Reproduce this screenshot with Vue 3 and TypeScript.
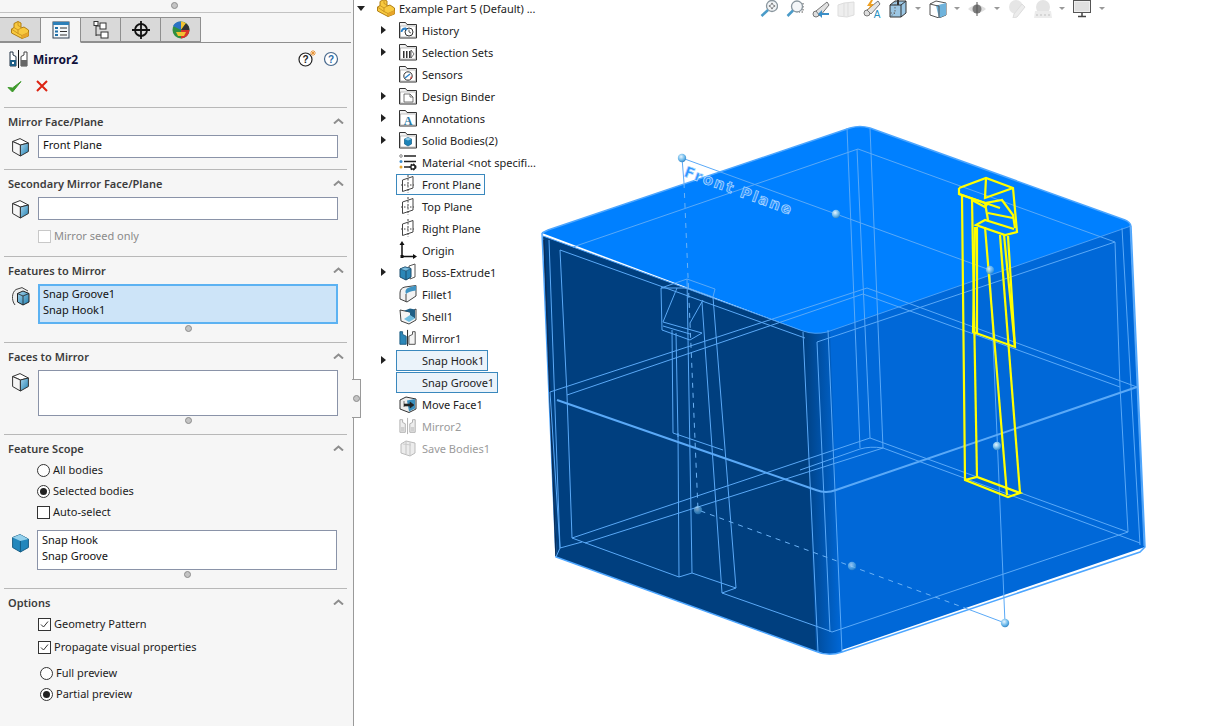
<script setup lang="ts">
interface TreeRow { label: string; icon: string; arrow?: boolean; selected?: boolean; tint?: boolean; muted?: boolean }

const treeRows: TreeRow[] = [
  { label: 'History', icon: 'f-history', arrow: true },
  { label: 'Selection Sets', icon: 'f-sets', arrow: true },
  { label: 'Sensors', icon: 'f-sensors' },
  { label: 'Design Binder', icon: 'f-binder', arrow: true },
  { label: 'Annotations', icon: 'f-annot', arrow: true },
  { label: 'Solid Bodies(2)', icon: 'f-bodies', arrow: true },
  { label: 'Material <not specifi...', icon: 'material' },
  { label: 'Front Plane', icon: 'plane', selected: true },
  { label: 'Top Plane', icon: 'plane' },
  { label: 'Right Plane', icon: 'plane' },
  { label: 'Origin', icon: 'origin' },
  { label: 'Boss-Extrude1', icon: 'boss', arrow: true },
  { label: 'Fillet1', icon: 'fillet' },
  { label: 'Shell1', icon: 'shell' },
  { label: 'Mirror1', icon: 'mirror-blue' },
  { label: 'Snap Hook1', icon: 'none', arrow: true, selected: true, tint: true },
  { label: 'Snap Groove1', icon: 'none', selected: true, tint: true },
  { label: 'Move Face1', icon: 'move' },
  { label: 'Mirror2', icon: 'mirror-gray', muted: true },
  { label: 'Save Bodies1', icon: 'save', muted: true },
]

const tabs = ['t-part', 't-list', 't-config', 't-target', 't-color']

const toolbar: { icon: string; caret?: boolean }[] = [
  { icon: 'b-zoomfit' }, { icon: 'b-zoom' }, { icon: 'b-prev' }, { icon: 'b-section' }, { icon: 'b-dyn' },
  { icon: 'b-style', caret: true }, { icon: 'b-display', caret: true }, { icon: 'b-eye', caret: true },
  { icon: 'b-edit' }, { icon: 'b-scene', caret: true }, { icon: 'b-monitor', caret: true },
]

const thin: string[] = [
  '560,250 805,338', '573,247 858,149 1115,242 1120,387', '817,342 1115,242',
  '550,392 867,288 1137,387', '567,395 863,294 1120,387',
  '567,395 572,538 679,577 692,573 736,588 722,593 827,630 832,632 1128,532 1120,387',
  '572,538 870,438 1128,532', '585,543 883,448 1140,543', '556,557 560,548 582,542',
  '560,250 567,395', '560,548 550,392', '549,240 560,548',
  '679,577 678,433', '692,573 687,279', '736,588 713,297', '722,593 702,302',
  '672,330 673,433 723,450', '676,333 678,437',
  '661,288 687,279 715,289 713,297 688,288 661,288 662,330 690,340 702,333 663,322 677,288',
  '703,300 690,323', '663,326 690,334',
  '847,128 860,448', '870,128 883,448', '857,149 870,438',
  '803,332 818,652', '817,342 830,632', '828,330 842,652',
  '1122,228 1140,545', '1130,225 1144,546',
  '682,158 836,214 990,270 1005,623', '682,158 684,183', '965,608 1005,623',
]
const thick: string[] = ['557,400 816,490 Q 826,494 836,490 L 1137,387']

const yellow: string[] = [
  '959,188 986,178 1013,188 1017,232 1005,235 976,225 985,220 1014,229',
  '959,188 959,194 985,203 1002,200 1013,215 1015,228',
  '959,194 1000,208', '1013,188 985,198 986,178', '985,203 988,220', '988,213 1013,218',
  '962,196 965,480 1008,497 1020,493 977,477 965,480', '972,199 977,477',
  '985,227 1007,495', '1000,235 1020,493',
  '975,227 973,332 1015,347 1004,235', '977,227 977,333', '1008,236 1015,347', '972,200 985,207 988,203',
]

const handles: [number, number, number][] = [
  [682, 158, 1], [836, 214, 1], [990, 270, 0.8], [997, 446, 1], [1005, 623, 1], [698, 510, 0.55], [852, 566, 0.65],
]
</script>

<template>
  <div class="app">
    <svg class="defs" width="0" height="0" aria-hidden="true">
      <defs>
        <linearGradient id="cubeBlue" x1="0" y1="0" x2="1" y2="1">
          <stop offset="0" stop-color="#a9d6ee" /><stop offset="1" stop-color="#1f7fb0" />
        </linearGradient>
        <linearGradient id="edgeGrad" x1="0" y1="0" x2="1" y2="0">
          <stop offset="0" stop-color="#003f7f" /><stop offset="1" stop-color="#0068d8" />
        </linearGradient>
        <radialGradient id="ball" cx="0.4" cy="0.35" r="0.7">
          <stop offset="0" stop-color="#e6f5ff" /><stop offset="0.6" stop-color="#6bb8ea" /><stop offset="1" stop-color="#2c7fc0" />
        </radialGradient>
        <symbol id="cube" viewBox="0 0 18 19">
          <path d="M.6 3.500 8 .6l8.400 4.400-8 2z" fill="#fff" stroke="#333" />
          <path d="M.6 3.500 8.400 7v11L.6 13.500z" fill="#f6f6f6" stroke="#333" />
          <path d="M8.400 7l8-2v8.500l-8 4.500z" fill="url(#cubeBlue)" stroke="#333" />
        </symbol>
        <symbol id="cube-solid" viewBox="0 0 18 19">
          <path d="M.6 3.500 8 .6l8.400 4.400v8.500L8.400 18 .6 13.500z" fill="#2387bc" stroke="#1a5f86" />
          <path d="M.6 3.500 8 .6l8.400 4.400-8 2z" fill="#93d0ec" />
          <path d="M8.400 7v11" stroke="#135c85" />
        </symbol>
        <symbol id="cube-multi" viewBox="0 0 18 19">
          <path d="M3 18C-1 13 0 5 4 2.500L10 .6l6 3.400" fill="#eee" stroke="#444" />
          <path d="M5.500 6.500 11 4l6 2.500v8.500L11 18l-5.500-3z" fill="url(#cubeBlue)" stroke="#222" />
          <path d="M5.500 6.500l5.500 2.500 6-2.500M11 9v9" fill="none" stroke="#222" stroke-width=".8" />
        </symbol>
        <symbol id="part" viewBox="0 0 18 18">
          <path d="M.5 8 3 6.500V2.500L7 .5 10 2v5l3-1 4.500 3v6L11 17.500.5 12z" fill="#f8c93f" stroke="#b07f16" />
          <path d="M3 6.500 7 9 10 7M7 .5 7 4.500 10 6M7 9v3.500l4 2 6.500-3M11 14.500v3M.5 8 7 12.500" fill="none" stroke="#c08c1c" stroke-width=".8" />
          <path d="M11 14.500l6.500-3V15L11 17.500z" fill="#e8a52a" />
        </symbol>
        <symbol id="t-part" viewBox="0 0 18 18"><use href="#part" /></symbol>
        <symbol id="t-list" viewBox="0 0 18 18">
          <rect x="1" y="1" width="16" height="16" fill="#f4f8fb" stroke="#2f3f50" />
          <rect x="1" y="1" width="16" height="3" fill="#2d7fb8" />
          <path d="M3 7h3M3 10.500h3M3 14h3" stroke="#1f6fa8" stroke-width="2" />
          <path d="M8 7h7M8 10.500h7M8 14h7" stroke="#333" />
        </symbol>
        <symbol id="t-config" viewBox="0 0 18 18">
          <path d="M4 1v14M4 5h4M4 14h5" fill="none" stroke="#333" />
          <rect x="2" y=".5" width="4" height="4" fill="#fff" stroke="#333" />
          <rect x="8" y="2" width="6" height="6" fill="#fff" stroke="#333" />
          <rect x="9" y="11" width="7" height="6" fill="#fff" stroke="#333" />
        </symbol>
        <symbol id="t-target" viewBox="0 0 18 18">
          <circle cx="9" cy="9" r="6" fill="none" stroke="#111" stroke-width="1.800" />
          <path d="M9 0v18M0 9h18" stroke="#111" stroke-width="1.800" />
        </symbol>
        <symbol id="t-color" viewBox="0 0 18 18">
          <circle cx="9" cy="9" r="8.500" fill="#2f8f3f" />
          <path d="M9 9 1 5a8.500 8.500 0 0 1 8-4.500z" fill="#2a72c4" />
          <path d="M9 9V.5a8.500 8.500 0 0 1 5 1.800z" fill="#f2c230" />
          <path d="M9 9 14 2.300a8.500 8.500 0 0 1 3.400 7z" fill="#333" />
          <path d="M9 9h8.500A8.500 8.500 0 0 1 9 17.500z" fill="#d9342b" />
          <path d="M4 11h10l-2 4H6z" fill="#f2c230" />
        </symbol>
        <symbol id="mirror-head" viewBox="0 0 20 18">
          <path d="M9.500 0v18" stroke="#111" />
          <path d="M1 2h3v3l3 1.500V16H1z" fill="#fff" stroke="#234" />
          <path d="M1 10h6v6H1z" fill="#1f5f86" /><path d="M3 12h2v2H3z" fill="#fff" />
          <path d="M18 2h-3v3l-3 1.500V16h6z" fill="#fff" stroke="#444" />
          <path d="M18 10h-6v6h6z" fill="#666" />
        </symbol>
        <symbol id="mirror-blue" viewBox="0 0 20 18">
          <path d="M9.500 0v18" stroke="#111" />
          <path d="M1 2h3v3l4 2v9H1z" fill="#2c87b8" stroke="#1c5a80" />
          <path d="M18 2h-3v3l-4 2v9h7z" fill="#f4f4f4" stroke="#444" />
        </symbol>
        <symbol id="mirror-gray" viewBox="0 0 20 18">
          <path d="M9.500 0v18" stroke="#aaa" />
          <path d="M1 2h3v3l3 1.500V16H1zM18 2h-3v3l-3 1.500V16h6z" fill="#eee" stroke="#aaa" />
          <path d="M2 10h4v5H2zM13 10h4v5h-4z" fill="#d0d0d0" />
        </symbol>
        <symbol id="folder" viewBox="0 0 18 18">
          <path d="M.5 4V1.500h6L8 3.500h9.500V17H.5z" fill="#f2f2f2" stroke="#333" />
          <rect x="1.500" y="5" width="15" height="11" fill="#fff" stroke="#999" stroke-width=".6" />
        </symbol>
        <symbol id="f-history" viewBox="0 0 18 18"><use href="#folder" />
          <circle cx="10" cy="11" r="4" fill="#fff" stroke="#333" /><path d="M10 8.500V11l2 1" fill="none" stroke="#333" stroke-width=".8" />
          <path d="M2.500 11a4 4 0 0 1 4-3.500L8 9" fill="none" stroke="#2c82c9" stroke-width="1.800" />
        </symbol>
        <symbol id="f-sets" viewBox="0 0 18 18"><use href="#folder" />
          <path d="M4 8h1.500v7H4zM7 8h1.500v7H7zM10 8h1.500v7H10z" fill="#333" /><path d="M12 7l3 4-3 4z" fill="#fff" stroke="#333" stroke-width=".7" />
        </symbol>
        <symbol id="f-sensors" viewBox="0 0 18 18"><use href="#folder" />
          <circle cx="9" cy="11" r="4.200" fill="#fff" stroke="#333" /><path d="M6 13 11 9" stroke="#2c82c9" stroke-width="1.500" /><path d="M11 14l2-1-1-2z" fill="#d9342b" />
        </symbol>
        <symbol id="f-binder" viewBox="0 0 18 18"><use href="#folder" />
          <path d="M5 7h6l3 3v5H5z" fill="#fff" stroke="#555" stroke-width=".8" /><path d="M11 7v3h3" fill="none" stroke="#555" stroke-width=".8" />
        </symbol>
        <symbol id="f-annot" viewBox="0 0 18 18"><use href="#folder" />
          <text x="9" y="15.500" text-anchor="middle" font-family="Liberation Serif, serif" font-weight="700" font-size="12" fill="#2a7aa8">A</text>
        </symbol>
        <symbol id="f-bodies" viewBox="0 0 18 18"><use href="#folder" />
          <path d="M5.500 8 9 6.500 12.500 8v5L9 15l-3.500-2z" fill="#1c83b8" stroke="#135c85" stroke-width=".7" /><path d="M5.500 8 9 9.500 12.500 8 9 6.500z" fill="#8fcbe8" />
        </symbol>
        <symbol id="material" viewBox="0 0 18 18">
          <circle cx="2" cy="3" r="1.300" fill="#fff" stroke="#555" stroke-width=".7" /><path d="M5 3h12" stroke="#222" stroke-width="1.500" />
          <circle cx="2" cy="8.500" r="1.500" fill="#3f8fd0" /><path d="M5 8.500h12" stroke="#222" stroke-width="1.500" />
          <circle cx="2" cy="14" r="1.500" fill="#e8a52a" /><path d="M5 14h6" stroke="#222" stroke-width="1.500" />
          <circle cx="14" cy="14" r="2.500" fill="none" stroke="#222" stroke-width="2" stroke-dasharray="1.500 .8" />
          <circle cx="14" cy="14" r="2.200" fill="none" stroke="#222" stroke-width="1.200" />
        </symbol>
        <symbol id="plane" viewBox="0 0 18 18">
          <path d="M3.500 5 14 1.500v11.500L3.500 16.500z" fill="#fff" stroke="#444" />
          <path d="M9 0v18" stroke="#444" stroke-dasharray="2 1.500" /><path d="M2 10h13" stroke="#444" stroke-dasharray="1.500 1.500" />
        </symbol>
        <symbol id="origin" viewBox="0 0 18 18">
          <path d="M3 2v13.500h13" fill="none" stroke="#111" stroke-width="1.500" />
          <path d="M3 0 .5 4h5zM18 15.500 14 13v5z" fill="#111" /><rect x="1.500" y="14" width="3" height="3" fill="#111" />
        </symbol>
        <symbol id="boss" viewBox="0 0 18 18">
          <path d="M10 3l6-2v13l-5 2z" fill="#fff" stroke="#555" />
          <path d="M1 6l5-2 6 1.500V14l-5 3-6-3z" fill="#2c87b8" stroke="#1c4c6c" /><path d="M1 6l6 2 5-2.500-6-1.500z" fill="#7dbfe0" stroke="#1c4c6c" stroke-width=".6" /><path d="M7 8v9" stroke="#1c4c6c" />
        </symbol>
        <symbol id="fillet" viewBox="0 0 18 18">
          <path d="M1 8Q1 3 6 2L17 .5V11L8 17l-7-3z" fill="#f2f2f2" stroke="#444" />
          <path d="M7 9Q5 4 10 2.500L17 .5v5Q10 6 7 9z" fill="#3f93c2" /><path d="M7 9v8" stroke="#444" />
        </symbol>
        <symbol id="shell" viewBox="0 0 18 18">
          <path d="M1 3l10 2 6-3v11l-7 4-8-3z" fill="#f4f4f4" stroke="#444" />
          <path d="M5 3.800 11 1.500 16 2.500v9l-5-3v-3z" fill="#1f5f86" /><path d="M5 12l6-4 5 3.500-6 3.500z" fill="#6fbde0" />
        </symbol>
        <symbol id="move" viewBox="0 0 18 18">
          <path d="M1 5l6-3 10 2v10l-7 3.500L1 14z" fill="#ececec" stroke="#333" />
          <path d="M8 5.500l8-1.500v9.500l-6 3z" fill="#3a8fbe" /><path d="M5 6v6M5 9h6V7l4 3-4 3v-2H5" fill="#222" stroke="#222" stroke-width=".6" />
        </symbol>
        <symbol id="save" viewBox="0 0 18 18">
          <path d="M2 5l5-3 9 2v10l-5 3-9-3z" fill="#ececec" stroke="#bbb" /><path d="M7 2v13M11 3.500V17" stroke="#c4c4c4" /><path d="M4 5l8 1" stroke="#ccc" />
        </symbol>

        <symbol id="b-zoomfit" viewBox="0 0 18 18">
          <circle cx="12" cy="6" r="5.500" fill="#f1f4f6" stroke="#8a969e" stroke-width="1.300" />
          <path d="M12 2.500l1.500 2h-3zM12 9.500l1.500-2h-3zM8.500 6l2-1.500v3zM15.500 6l-2-1.500v3z" fill="#666" />
          <path d="M8 10 1.500 16" stroke="#4a9bc8" stroke-width="2.500" />
        </symbol>
        <symbol id="b-zoom" viewBox="0 0 18 18">
          <path d="M17 3v9h-4" fill="none" stroke="#555" stroke-dasharray="1.500 1.500" />
          <circle cx="11" cy="6.500" r="5.500" fill="#f4f6f8" stroke="#8a969e" stroke-width="1.300" /><path d="M7 10.500 1.500 16" stroke="#4a9bc8" stroke-width="2.500" />
        </symbol>
        <symbol id="b-prev" viewBox="0 0 18 18">
          <circle cx="4" cy="14" r="3" fill="#ddd" stroke="#777" /><path d="M4 11 15 2l2 3-9 11z" fill="#e0e0e0" stroke="#777" />
          <path d="M17 13H10V10l-4 4 4 4v-3h7z" fill="#3a8fc8" />
        </symbol>
        <symbol id="b-section" viewBox="0 0 18 18"><path d="M1 5l6-2 10-1v13l-7 2-9-1z" fill="#eee" stroke="#ddd" /><path d="M7 3v13M11 3v13" stroke="#ddd" /></symbol>
        <symbol id="b-dyn" viewBox="0 0 18 18">
          <circle cx="4" cy="13" r="3" fill="#ddd" stroke="#777" /><path d="M4 10 15 1l2 3-9 10z" fill="#e4e4e4" stroke="#777" /><path d="M8 0 4 6h3L5 10l6-6H8l2-4z" fill="#f0a020" />
          <text x="14" y="18" text-anchor="middle" font-family="Liberation Sans, sans-serif" font-size="10" fill="#2a8fc0">A</text>
        </symbol>
        <symbol id="b-style" viewBox="0 0 18 18">
          <path d="M1 5l5-4h11v12l-5 4H1z" fill="#9cc7e4" stroke="#333" /><path d="M1 5h11v12M12 5l5-4" fill="none" stroke="#333" /><path d="M6 1v12H1M6 13l-5 4" fill="none" stroke="#666" stroke-dasharray="1.500 1.500" />
          <path d="M8 0h2v5H8z" fill="#333" />
        </symbol>
        <symbol id="b-display" viewBox="0 0 18 18">
          <path d="M1 4l6-3 10 2v12l-7 3-9-3z" fill="#fff" stroke="#555" /><path d="M7 5.500 17 3v12l-7 3z" fill="#6fb3dc" /><path d="M1 4l6 1.500M7 5.500l3 .5V18" fill="none" stroke="#555" />
        </symbol>
        <symbol id="b-eye" viewBox="0 0 18 18">
          <path d="M0 9Q9 1 18 9 9 17 0 9z" fill="#e0e0e0" /><circle cx="9" cy="9" r="4.500" fill="#7c7c7c" /><path d="M9 2v14" stroke="#555" />
        </symbol>
        <symbol id="b-edit" viewBox="0 0 18 18"><circle cx="8" cy="7" r="7" fill="#e6e6e6" /><path d="M17 7 9 17l-4 1 1-4 8-10z" fill="#ececec" stroke="#ddd" /></symbol>
        <symbol id="b-scene" viewBox="0 0 18 18"><circle cx="9" cy="7" r="7" fill="#e4e4e4" /><path d="M1 11h16l1 7H0z" fill="#ececec" /><path d="M2 14h2v2H2zM6 14h2v2H6zM10 14h2v2h-2zM14 14h2v2h-2z" fill="#d6d6d6" /></symbol>
        <symbol id="b-monitor" viewBox="0 0 18 18"><rect x=".5" y=".5" width="17" height="12" fill="#eee" stroke="#555" /><rect x="2" y="2" width="14" height="9" fill="#e0e0e0" /><path d="M9 13v3M5 16.500h8" stroke="#444" stroke-width="1.500" /></symbol>
      </defs>
    </svg>

    <aside class="panel">
      <div class="panel-top"><span class="dot"></span></div>
      <div class="tabs">
        <div v-for="(t, i) in tabs" :key="t" class="tab" :class="{ active: i === 1 }">
          <svg class="tab-ico"><use :href="'#' + t" /></svg>
        </div>
      </div>

      <div class="title-row">
        <svg class="title-ico" viewBox="0 0 20 18"><use href="#mirror-head" /></svg>
        <span class="title">Mirror2</span>
        <span class="spacer"></span>
        <svg class="help" viewBox="0 0 18 18">
          <circle cx="7.500" cy="9.500" r="6.500" fill="#fff" stroke="#222" stroke-width="1.200" />
          <text x="7.500" y="13" text-anchor="middle" font-family="Liberation Sans, sans-serif" font-weight="700" font-size="10" fill="#222">?</text>
          <path d="M15 0v6M12 3h6M13 1l4 4M17 1l-4 4" stroke="#e89030" stroke-width=".9" />
        </svg>
        <svg class="help help2" viewBox="0 0 16 16">
          <circle cx="8" cy="8" r="6.500" fill="#fff" stroke="#47688c" stroke-width="1.200" />
          <text x="8" y="11.500" text-anchor="middle" font-family="Liberation Sans, sans-serif" font-weight="700" font-size="10" fill="#2b6ca8">?</text>
        </svg>
      </div>
      <div class="action-row">
        <svg class="ok" viewBox="0 0 15 13"><path d="M1 7.500 5.500 12 14 1.500 5.500 8z" fill="#3f9a2c" stroke="#3f9a2c" stroke-linejoin="round" /></svg>
        <svg class="no" viewBox="0 0 12 12"><path d="M1 1l10 10M11 1 1 11" stroke="#dd2412" stroke-width="2" /></svg>
      </div>

      <section class="sec s1">
        <header class="sec-head"><span>Mirror Face/Plane</span><svg class="chev" viewBox="0 0 11 6"><path d="M1 5.500 5.500 1.500 10 5.500" fill="none" stroke="#8e8e8e" stroke-width="2" /></svg></header>
        <div class="field-row">
          <svg class="cube"><use href="#cube" /></svg>
          <div class="field one">Front Plane</div>
        </div>
      </section>

      <section class="sec s2">
        <header class="sec-head"><span>Secondary Mirror Face/Plane</span><svg class="chev" viewBox="0 0 11 6"><path d="M1 5.500 5.500 1.500 10 5.500" fill="none" stroke="#8e8e8e" stroke-width="2" /></svg></header>
        <div class="field-row">
          <svg class="cube"><use href="#cube" /></svg>
          <div class="field one"></div>
        </div>
        <label class="opt seed"><span class="box off"></span><span class="muted">Mirror seed only</span></label>
      </section>

      <section class="sec s3">
        <header class="sec-head"><span>Features to Mirror</span><svg class="chev" viewBox="0 0 11 6"><path d="M1 5.500 5.500 1.500 10 5.500" fill="none" stroke="#8e8e8e" stroke-width="2" /></svg></header>
        <div class="field-row">
          <svg class="cube"><use href="#cube-multi" /></svg>
          <div class="field list active h40"><div>Snap Groove1</div><div>Snap Hook1</div></div>
        </div>
        <div class="grip"><span class="dot"></span></div>
      </section>

      <section class="sec s4">
        <header class="sec-head"><span>Faces to Mirror</span><svg class="chev" viewBox="0 0 11 6"><path d="M1 5.500 5.500 1.500 10 5.500" fill="none" stroke="#8e8e8e" stroke-width="2" /></svg></header>
        <div class="field-row">
          <svg class="cube"><use href="#cube" /></svg>
          <div class="field list h46"></div>
        </div>
        <div class="grip"><span class="dot"></span></div>
      </section>

      <section class="sec s5">
        <header class="sec-head"><span>Feature Scope</span><svg class="chev" viewBox="0 0 11 6"><path d="M1 5.500 5.500 1.500 10 5.500" fill="none" stroke="#8e8e8e" stroke-width="2" /></svg></header>
        <div class="opts scope">
          <label class="opt"><span class="radio"></span>All bodies</label>
          <label class="opt"><span class="radio on"></span>Selected bodies</label>
          <label class="opt"><span class="box"></span>Auto-select</label>
        </div>
        <div class="field-row bodies">
          <svg class="cube"><use href="#cube-solid" /></svg>
          <div class="field list h40"><div>Snap Hook</div><div>Snap Groove</div></div>
        </div>
        <div class="grip left"><span class="dot"></span></div>
      </section>

      <section class="sec s6">
        <header class="sec-head"><span>Options</span><svg class="chev" viewBox="0 0 11 6"><path d="M1 5.500 5.500 1.500 10 5.500" fill="none" stroke="#8e8e8e" stroke-width="2" /></svg></header>
        <div class="opts checks">
          <label class="opt"><span class="box"><svg viewBox="0 0 11 11"><path d="M2 5.500 4.500 8 9 2.500" fill="none" stroke="#333" /></svg></span>Geometry Pattern</label>
          <label class="opt"><span class="box"><svg viewBox="0 0 11 11"><path d="M2 5.500 4.500 8 9 2.500" fill="none" stroke="#333" /></svg></span>Propagate visual properties</label>
        </div>
        <div class="opts previews">
          <label class="opt"><span class="radio"></span>Full preview</label>
          <label class="opt"><span class="radio on"></span>Partial preview</label>
        </div>
      </section>

      <div class="notch"><span class="dot"></span></div>
    </aside>

    <nav class="tree">
      <div class="root-row">
        <span class="arrow down"></span>
        <svg class="part-ico"><use href="#part" /></svg>
        <span>Example Part 5 (Default) ...</span>
      </div>
      <div v-for="r in treeRows" :key="r.label" class="row">
        <span class="arrow-col"><span v-if="r.arrow" class="arrow"></span></span>
        <span class="item" :class="{ selected: r.selected, tint: r.tint, muted: r.muted }">
          <svg v-if="r.icon !== 'none'" class="row-ico"><use :href="'#' + r.icon" /></svg>
          <span v-else class="row-ico"></span>
          <span>{{ r.label }}</span>
        </span>
      </div>
    </nav>

    <main class="viewport">
      <svg class="scene" viewBox="540 0 667 726" width="667" height="726">
        <path d="M822 333 1130 223 1145 547 830 654Z" fill="#0068d8" />
        <path d="M543 236 806 332 818 652 556 557Z" fill="#003f7f" />
        <path d="M803 330 Q815 335 830 331 L842 652 Q828 657 816 651Z" fill="url(#edgeGrad)" />
        <path d="M542 233 Q544 231 548 230 L850 128 Q860 125 870 128 L1125 220 Q1130 222 1131 226 L827 332 Q815 335 803 331Z" fill="#0080ff" />
        <path d="M542 233 548 230 850 128Q860 125 870 128L1125 220Q1130 222 1131 226M1131 226 1145 547 1140 552 842 652Q828 657 815 651L556 557 542 233" fill="none" stroke="#4da6ff" stroke-width="1.500" />
        <path d="M543 236 803 331Q815 335 827 332L1131 226" fill="none" stroke="#4a9ff5" />
        <path d="M544 240 556 556" stroke="#0b2f5a" stroke-width="1.500" />

        <polyline v-for="p in thin" :key="p" :points="p" fill="none" stroke="#5aa9f7" />
        <path v-for="p in thick" :key="p" :d="'M' + p" fill="none" stroke="#5aa9f7" stroke-width="2" />
        <path d="M800 470 860 449Q870 446 883 448" fill="none" stroke="#5aa9f7" />
        <path d="M684 183 698 510 965 608" fill="none" stroke="#6cb2f5" stroke-dasharray="5 5" />

        <text class="plane-label" transform="translate(683 176) rotate(20)">Front Plane</text>

        <polyline v-for="p in yellow" :key="p" :points="p" fill="none" stroke="#ffff00" stroke-width="2.200" />
        <circle v-for="h in handles" :key="h[0]" :cx="h[0]" :cy="h[1]" r="4.200" fill="url(#ball)" :opacity="h[2]" />
      </svg>
      <div class="toolbar">
        <template v-for="b in toolbar" :key="b.icon">
          <svg class="tool"><use :href="'#' + b.icon" /></svg>
          <span v-if="b.caret" class="caret"></span>
        </template>
      </div>
    </main>
  </div>
</template>

<style scoped>
.app {
  display: flex;
  width: 1207px;
  height: 726px;
  overflow: hidden;
  background: #fff;
  font-family: "Noto Sans", "Open Sans", sans-serif;
  font-size: 11px;
  color: #1c1c1c;
}
.defs { position: absolute; }
.panel {
  position: relative;
  flex: 0 0 354px;
  min-width: 0;
  box-sizing: border-box;
  background: #f6f6f6;
  border-right: 1px solid #9a9a9a;
}
.dot {
  display: block;
  width: 5px;
  height: 5px;
  border-radius: 50%;
  background: #c4c4c4;
  border: 1px solid #8c8c8c;
}
.panel-top {
  height: 10px;
  padding: 2px 2px 0 0;
  border-bottom: 1px solid #c2c2c2;
  margin-right: 2px;
  display: flex;
  justify-content: center;
}
.tabs {
  display: flex;
  margin-top: 4px;
  margin-right: 2px;
  height: 25px;
  border-bottom: 1px solid #8f8f8f;
}
.tab {
  width: 40px;
  height: 25px;
  box-sizing: border-box;
  background: #d9d9d9;
  border: 1px solid #8f8f8f;
  border-left: 0;
  display: flex;
  align-items: center;
  justify-content: center;
}
.tab:first-child { width: 41px; }
.tab.active {
  background: #f6f6f6;
  border-bottom-color: #f6f6f6;
  height: 26px;
}
.tab-ico { width: 18px; height: 18px; }
.title-row {
  display: flex;
  align-items: center;
  height: 18px;
  margin: 7px 14px 0 9px;
}
.title-ico { width: 20px; height: 18px; }
.title {
  margin-left: 4px;
  font-weight: 700;
  font-size: 12px;
  color: #10103a;
}
.spacer { flex: 1; }
.help { width: 18px; height: 18px; }
.help2 { width: 16px; height: 16px; margin-left: 7px; }
.action-row {
  display: flex;
  align-items: center;
  height: 16px;
  margin: 10px 0 13px 7px;
}
.ok { width: 15px; height: 13px; }
.no { width: 12px; height: 12px; margin-left: 14px; }
.sec {
  margin: 0 6px 0 4px;
  border-top: 1px solid #b8b8b8;
}
.sec-head {
  display: flex;
  align-items: center;
  justify-content: space-between;
  height: 20px;
  margin: 3px 0 4px;
  padding: 0 3px 0 4px;
  font-weight: 600;
  color: #3c3c3c;
}
.chev { width: 11px; height: 6px; }
.field-row { display: flex; align-items: flex-start; }
.cube { width: 18px; height: 19px; margin: 3px 8px 0 8px; flex: none; }
.field {
  box-sizing: border-box;
  width: 300px;
  background: #fff;
  border: 1px solid #8a93a8;
  padding-left: 4px;
  color: #111;
}
.field.one { height: 23px; line-height: 17px; }
.field.list { padding-top: 1px; line-height: 16px; }
.h40 { height: 40px; }
.h46 { height: 46px; }
.field.active {
  background: #cde4f8;
  border: 2px solid #5cb2f2;
  padding-left: 3px;
  padding-top: 0;
}
.s1 { padding-bottom: 11px; }
.s2 { padding-bottom: 13px; }
.s3, .s4, .s5 { padding-bottom: 10px; }
.grip { height: 8px; display: flex; align-items: center; padding-left: 181px; }
.grip.left { padding-left: 180px; }
.opt {
  display: flex;
  align-items: flex-start;
  height: 16px;
  line-height: 16px;
  white-space: nowrap;
}
.opts { display: flex; flex-direction: column; gap: 5px; }
.seed { margin: 8px 0 -2px 34px; gap: 3px; height: 17px; }
.muted { color: #8a8a8a; }
.box {
  box-sizing: border-box;
  width: 13px;
  height: 13px;
  margin-top: 2px;
  border: 1px solid #333;
  background: #fff;
  margin-right: 3px;
  flex: none;
  display: flex;
}
.box svg { width: 11px; height: 11px; }
.box.off { border-color: #c8c8c8; margin-right: 0; }
.radio {
  box-sizing: border-box;
  width: 13px;
  height: 13px;
  margin-top: 2px;
  border: 1px solid #333;
  border-radius: 50%;
  background: #fff;
  margin-right: 3px;
  flex: none;
  display: flex;
  align-items: center;
  justify-content: center;
}
.radio.on::after {
  content: "";
  width: 7px;
  height: 7px;
  border-radius: 50%;
  background: #222;
}
.scope { margin-left: 33px; }
.bodies { margin-top: 10px; }
.bodies .field { margin-left: -1px; }
.bodies .cube { margin-top: 4px; }
.checks { margin-left: 34px; gap: 7px; }
.previews { margin: 10px 0 0 36px; }

.notch {
  position: absolute;
  left: 352px;
  top: 379px;
  box-sizing: border-box;
  width: 9px;
  height: 39px;
  background: #f6f6f6;
  border: 1px solid #9a9a9a;
  border-left: 0;
  display: flex;
  align-items: center;
  justify-content: flex-end;
}

.tree {
  flex: 0 0 186px;
  min-width: 0;
  white-space: nowrap;
  color: #222;
}
.root-row {
  display: flex;
  align-items: center;
  height: 16px;
  padding-bottom: 3px;
  padding-left: 3px;
}
.arrow {
  display: block;
  width: 0;
  height: 0;
  border-style: solid;
  border-width: 4px 0 4px 5px;
  border-color: transparent transparent transparent #222;
}
.arrow.down {
  border-width: 5px 4px 0 4px;
  border-color: #222 transparent transparent transparent;
}
.part-ico { width: 18px; height: 18px; margin: 0 4px 0 12px; }
.row { display: flex; align-items: center; height: 22px; padding-left: 27px; }
.arrow-col { width: 15px; display: flex; }
.item {
  display: inline-flex;
  align-items: center;
  box-sizing: border-box;
  height: 21px;
  padding: 0 3px 0 2px;
  border: 1px solid transparent;
}
.item.selected { border-color: #3a88bd; background: #fbfdff; }
.item.tint { background: #ebf3fa; }
.item.muted { color: #9b9b9b; }
.row-ico { width: 18px; height: 18px; margin-right: 5px; flex: none; }

.viewport { position: relative; flex: 1; min-width: 0; }
.scene { display: block; }
.plane-label {
  font-family: "DejaVu Sans", sans-serif;
  font-weight: 700;
  font-size: 15px;
  letter-spacing: 1.600px;
  fill: #2f95ff;
  stroke: #b9dcff;
  stroke-width: 0.7px;
}
.toolbar {
  position: absolute;
  left: 220px;
  top: 0;
  display: flex;
  align-items: flex-start;
  gap: 7.800px;
}
.tool { width: 18px; height: 18px; flex: none; }
.caret {
  width: 0;
  height: 0;
  margin-top: 7px;
  border-style: solid;
  border-width: 3px 3px 0 3px;
  border-color: #999 transparent transparent transparent;
}
</style>
